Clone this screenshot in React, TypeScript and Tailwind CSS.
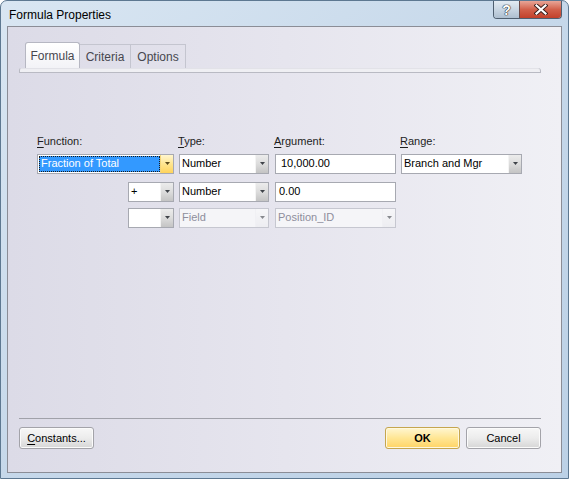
import React from 'react';

// Small dropdown arrow used by the combo buttons
const Arrow: React.FC<{ dark?: boolean }> = ({ dark }) => (
  <svg width="5" height="3" viewBox="0 0 5 3" className="block">
    <path d="M0 0 H5 L2.5 3 Z" fill={dark ? '#5b4a1c' : '#3f4349'} />
  </svg>
);

interface ComboProps {
  className: string;
  text?: string;
  disabled?: boolean;
  selected?: boolean;
  hot?: boolean;
}

const Combo: React.FC<ComboProps> = ({ className, text, disabled, selected, hot }) => (
  <div
    className={`flex h-[20px] border ${
      disabled ? 'border-[#c6c7d0] bg-[#f5f5f8]' : 'border-[#a7a9b1] bg-white'
    } ${className}`}
  >
    <div className="flex flex-1 items-center overflow-hidden pl-[1px]">
      {selected ? (
        <div className="flex h-[16px] flex-1 items-center border border-dotted border-[#1a1a1a] bg-[#3399ff] pl-[1px] text-white">
          {text}
        </div>
      ) : (
        <span className={`pl-[1px] ${disabled ? 'text-[#8e8e9c]' : 'text-black'}`}>{text}</span>
      )}
    </div>
    <div
      className={`flex w-[13px] items-center justify-center border-l ${
        hot
          ? 'border-[#f4d67c] bg-gradient-to-b from-[#fff6cf] via-[#ffe58e] to-[#ffd35a]'
          : disabled
          ? 'border-[#eeeef2] bg-gradient-to-b from-[#f7f7f9] to-[#e9e9ee] opacity-60'
          : 'border-[#f4f4f4] bg-gradient-to-b from-[#ececec] via-[#dcdcdc] to-[#c4c4c4]'
      }`}
    >
      <Arrow dark={hot} />
    </div>
  </div>
);

const Label: React.FC<{ k: string; rest: string }> = ({ k, rest }) => (
  <span className="text-[11px] text-[#1d1d1d]">
    <span className="underline underline-offset-2">{k}</span>
    {rest}
  </span>
);

export default function App() {
  return (
    <div className="h-[479px] w-[569px] overflow-hidden font-['Segoe_UI','Liberation_Sans',sans-serif] text-[11px]">
      <div className="flex h-full w-full flex-col rounded-t-[7px] border border-[#5d7891] bg-gradient-to-br from-[#d9e6f2] via-[#c6d8ea] to-[#bcd1e6]">
        {/* title bar */}
        <div className="flex h-[25px] shrink-0 items-start">
          <div className="pl-[8px] pt-[5px] text-[12px] text-black">Formula Properties</div>
          <div className="ml-auto mr-[6px] flex h-[18px] overflow-hidden rounded-b-[4px] border border-t-0 border-[#4f5f70]">
            <div className="flex w-[25px] items-center justify-center bg-gradient-to-b from-[#e3ebf3] via-[#c9d6e3] to-[#aebfd0] text-[14px] font-bold leading-none text-white [text-shadow:0_0_1px_#222,0_0_1px_#222,0_0_1px_#222]">
              ?
            </div>
            <div className="flex w-[42px] items-center justify-center border-l border-[#6a4a48] bg-gradient-to-b from-[#e8a597] via-[#d2604a] to-[#c2402a]">
              <svg width="14" height="11" viewBox="0 0 14 11">
                <path d="M2.5 1.5 L11.5 9.5 M11.5 1.5 L2.5 9.5" stroke="#3a1f1c" strokeWidth="4" strokeLinecap="square" />
                <path d="M2.5 1.5 L11.5 9.5 M11.5 1.5 L2.5 9.5" stroke="#ffffff" strokeWidth="2.2" strokeLinecap="square" />
              </svg>
            </div>
          </div>
        </div>

        {/* client area */}
        <div className="mx-[6px] mb-[5px] flex flex-1 flex-col border border-[#8b8d96] bg-gradient-to-r from-[#dcdbe7] via-[#e6e5ee] to-[#f0f0f5]">
          {/* tabs */}
          <div className="ml-[11px] mt-[15px] w-[522px] text-[12px]">
            <div className="flex h-[26px] items-end pl-[6px]">
              <div className="flex h-[26px] w-[55px] items-center justify-center rounded-t-[3px] border border-b-0 border-[#b6b7c2] bg-gradient-to-b from-white to-[#f3f3f7] text-[#47474f]">
                Formula
              </div>
              <div className="flex h-[24px] w-[51px] items-center justify-center border-t border-r border-[#c4c5cf] text-[#47474f]">
                Criteria
              </div>
              <div className="flex h-[24px] w-[55px] items-center justify-center border-t border-r border-[#c4c5cf] text-[#47474f]">
                Options
              </div>
            </div>
            <div className="h-[5px] rounded-tr-[3px] rounded-tl-[2px] border border-t-0 border-[#b9bac3] bg-[#efeff3] shadow-[inset_0_1px_0_#e2e2e8]" />
          </div>

          {/* form */}
          <div className="ml-[29px] mt-[60px] grid grid-cols-[142px_96px_126px_121px]">
            <div className="mb-[4px]"><Label k="F" rest="unction:" /></div>
            <div className="mb-[4px] -ml-[1px]"><Label k="T" rest="ype:" /></div>
            <div className="mb-[4px] -ml-[1px]"><Label k="A" rest="rgument:" /></div>
            <div className="mb-[4px] -ml-[1px]"><Label k="R" rest="ange:" /></div>

            <div><Combo className="w-[137px]" text="Fraction of Total" selected hot /></div>
            <div><Combo className="w-[90px]" text="Number" /></div>
            <div>
              <div className="flex h-[20px] w-[121px] items-center border border-[#a7a9b1] bg-white pl-[5px]">10,000.00</div>
            </div>
            <div><Combo className="w-[121px]" text="Branch and Mgr" /></div>

            <div className="mt-[8px] flex w-[137px] justify-end"><Combo className="w-[46px]" text=" +" /></div>
            <div className="mt-[8px]"><Combo className="w-[90px]" text="Number" /></div>
            <div className="mt-[8px]">
              <div className="flex h-[20px] w-[121px] items-center border border-[#a7a9b1] bg-white pl-[3px]">0.00</div>
            </div>
            <div />

            <div className="mt-[6px] flex w-[137px] justify-end"><Combo className="w-[46px]" text="" /></div>
            <div className="mt-[6px]"><Combo className="w-[90px]" text="Field" disabled /></div>
            <div className="mt-[6px]"><Combo className="w-[121px]" text="Position_ID" disabled /></div>
            <div />
          </div>

          {/* footer */}
          <div className="ml-[11px] mt-auto w-[522px] pb-[23px]">
            <div className="h-[2px] border-t border-[#a0a1a9] border-b-white" />
            <div className="mt-[7px] flex h-[22px] items-stretch">
              <button className="w-[75px] rounded-[3px] border border-[#a3a3a9] bg-gradient-to-b from-[#f7f7f7] via-[#ececec] to-[#d6d6d6] text-black shadow-[inset_0_0_0_1px_#fbfbfb]">
                <span className="underline underline-offset-2">C</span>onstants...
              </button>
              <button className="ml-auto w-[75px] rounded-[3px] border border-[#c5a64f] bg-gradient-to-b from-[#fff6d0] via-[#ffe694] to-[#ffd463] font-bold text-black shadow-[inset_0_0_0_1px_#fff8e0]">
                OK
              </button>
              <button className="ml-[6px] w-[75px] rounded-[3px] border border-[#a3a3a9] bg-gradient-to-b from-[#f7f7f7] via-[#ececec] to-[#d6d6d6] text-black shadow-[inset_0_0_0_1px_#fbfbfb]">
                Cancel
              </button>
            </div>
          </div>
        </div>
      </div>
    </div>
  );
}
